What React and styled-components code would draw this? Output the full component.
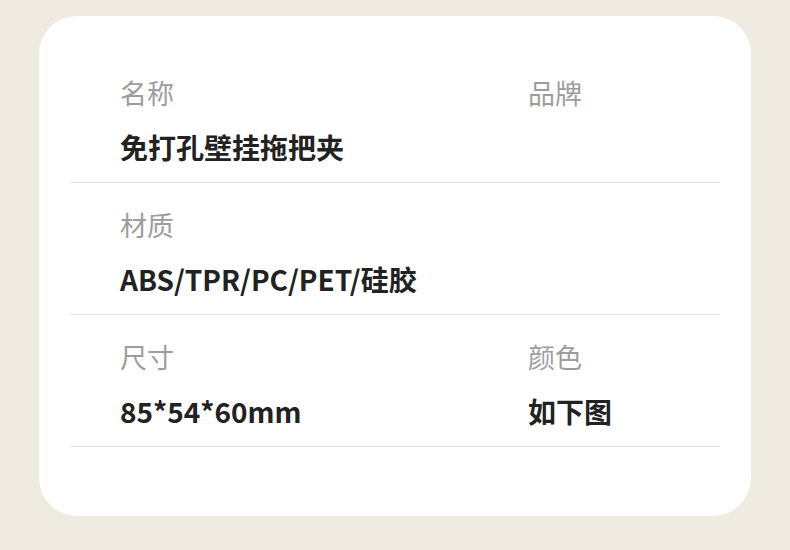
import React from "react";
import styled, { createGlobalStyle } from "styled-components";

const Global = createGlobalStyle`
  html, body { margin: 0; padding: 0; background: #efebe1; }
  body { font-family: "Noto Sans CJK SC", "Noto Sans", sans-serif; }
`;

const Page = styled.div`
  width: 790px;
  height: 550px;
  box-sizing: border-box;
  padding: 16px 39px 34px;
  background: #efebe1;
`;

const Card = styled.div`
  background: #ffffff;
  border-radius: 38px;
  height: 500px;
  box-sizing: border-box;
  padding: 35px 31px 0;
`;

const Row = styled.div`
  display: grid;
  grid-template-columns: 408px 1fr;
  padding: 24px 0 16px 50px;
  border-bottom: 1px solid #e3e3e3;
  height: 132px;
  box-sizing: border-box;
`;

const Field = styled.div`
  display: flex;
  flex-direction: column;
  gap: 18px;
`;

const Label = styled.div`
  font-size: 27px;
  line-height: 36px;
  height: 36px;
  color: #9d9d9d;
  font-weight: 400;
`;

const Value = styled.div`
  font-size: 28px;
  line-height: 36px;
  height: 36px;
  color: #222222;
  font-weight: 700;
  white-space: nowrap;
`;

const rows = [
  [
    { label: "名称", value: "免打孔壁挂拖把夹" },
    { label: "品牌", value: "" },
  ],
  [{ label: "材质", value: "ABS/TPR/PC/PET/硅胶" }],
  [
    { label: "尺寸", value: "85*54*60mm" },
    { label: "颜色", value: "如下图" },
  ],
];

export default function App() {
  return (
    <>
      <Global />
      <Page>
        <Card>
          {rows.map((r, i) => (
            <Row key={i}>
              {r.map((f) => (
                <Field key={f.label}>
                  <Label>{f.label}</Label>
                  <Value>{f.value}</Value>
                </Field>
              ))}
            </Row>
          ))}
        </Card>
      </Page>
    </>
  );
}
